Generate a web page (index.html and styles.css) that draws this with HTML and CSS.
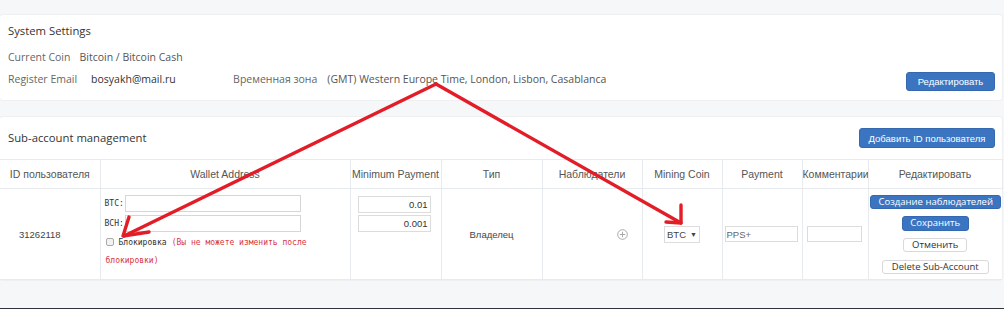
FILE: index.html
```html
<!DOCTYPE html>
<html>
<head>
<meta charset="utf-8">
<link rel="stylesheet" href="styles.css">
</head>
<body>
<div class="page">
  <section class="card settings">
    <div class="card-title">System Settings</div>
    <div class="info-row">
      <span class="label">Current Coin</span>
      <span class="value coin">Bitcoin / Bitcoin Cash</span>
    </div>
    <div class="info-row last">
      <span class="label">Register Email</span>
      <span class="value email">bosyakh@mail.ru</span>
      <span class="label">Временная зона</span>
      <span class="value tz">(GMT) Western Europe Time, London, Lisbon, Casablanca</span>
      <button class="btn btn-primary btn-edit">Редактировать</button>
    </div>
  </section>

  <section class="card subaccounts">
    <div class="card-head">
      <div class="card-title">Sub-account management</div>
      <button class="btn btn-primary btn-add">Добавить ID пользователя</button>
    </div>
    <table class="grid">
      <colgroup>
        <col class="c-id"><col class="c-wallet"><col class="c-min"><col class="c-type"><col class="c-obs"><col class="c-coin"><col class="c-pay"><col class="c-comm"><col class="c-edit">
      </colgroup>
      <thead>
        <tr>
          <th>ID пользователя</th>
          <th>Wallet Address</th>
          <th>Minimum Payment</th>
          <th>Тип</th>
          <th>Наблюдатели</th>
          <th>Mining Coin</th>
          <th>Payment</th>
          <th>Комментарии</th>
          <th>Редактировать</th>
        </tr>
      </thead>
      <tbody>
        <tr class="data-row">
          <td class="id">31262118</td>
          <td class="wallet">
            <div class="addr"><span class="mono">BTC:</span><input class="addr-input" type="text"></div>
            <div class="addr"><span class="mono">BCH:</span><input class="addr-input" type="text"></div>
            <div class="lock mono"><span class="checkbox"></span><span class="lock-label">Блокировка</span><span class="warn">(Вы не можете изменить после</span></div>
            <div class="lock mono"><span class="warn">блокировки)</span></div>
          </td>
          <td class="minpay">
            <input class="num-input" type="text" value="0.01">
            <input class="num-input" type="text" value="0.001">
          </td>
          <td class="type">Владелец</td>
          <td class="obs">
            <svg class="plus" width="11" height="11" viewBox="0 0 11 11"><circle cx="5.5" cy="5.5" r="4.8" fill="none" stroke="#a9a9a9" stroke-width="1"/><path d="M5.5 2.8v5.4M2.8 5.5h5.4" stroke="#a9a9a9" stroke-width="1"/></svg>
          </td>
          <td class="coin-cell"><span class="select">BTC <span class="caret">▼</span></span></td>
          <td class="pay-cell"><input class="pay-input" type="text" value="PPS+"></td>
          <td class="comm-cell"><input class="comm-input" type="text"></td>
          <td class="edit">
            <div class="actions">
              <button class="btn btn-primary act act-wide">Создание наблюдателей</button>
              <button class="btn btn-primary act act-save">Сохранить</button>
              <button class="btn btn-default act act-cancel">Отменить</button>
              <button class="btn btn-default act act-del">Delete Sub-Account</button>
            </div>
          </td>
        </tr>
      </tbody>
    </table>
  </section>

  <svg class="annotations" width="1004" height="309" viewBox="0 0 1004 309">
    <g fill="none" stroke="#e31d27" stroke-width="3.4" stroke-linecap="round" stroke-linejoin="round">
      <path d="M436 84 L124 236"/>
      <path d="M129 217 L123 236 L149 232"/>
      <path d="M436 84 L681 223"/>
      <path d="M681 205 L681 223 L666 222"/>
    </g>
  </svg>
</div>
</body>
</html>
```
FILE: styles.css
```css
html, body {
  margin: 0;
  padding: 0;
}
body {
  background: #f6f7f9;
  font-family: "Open Sans", "Liberation Sans", sans-serif;
  color: #333;
}
.page {
  position: relative;
  box-sizing: border-box;
  min-height: 309px;
  padding: 15px 2px 0 0;
  border-bottom: 1px solid #30343c;
}
.card {
  background: #fff;
  border-radius: 3px;
  box-shadow: 0 0 0 1px #eef0f2;
}
.settings {
  box-sizing: border-box;
  height: 85px;
  padding: 0 7px 0 8px;
}
.card-title {
  font-size: 11.3px;
  line-height: 32px;
  color: #333;
}
.info-row {
  display: flex;
  align-items: flex-start;
  font-size: 10.5px;
  line-height: 21px;
}
.info-row.last {
  line-height: 22px;
}
.label {
  color: #666;
}
.value {
  color: #333;
}
.coin {
  margin-left: 9px;
  color: #555;
}
.email {
  margin-left: 14px;
  width: 142px;
}
.tz {
  margin-left: 10px;
  color: #555;
}
.btn {
  font-family: "Liberation Sans", Arial, sans-serif;
  border-radius: 3px;
  padding: 0;
  cursor: pointer;
}
.btn-primary {
  background: #3b75c2;
  border: 1px solid #3469b0;
  color: #fff;
}
.btn-default {
  background: #fff;
  border: 1px solid #d9d9d9;
  color: #333;
}
.btn-edit {
  margin-left: auto;
  margin-top: 4px;
  width: 89px;
  height: 19px;
  font-size: 9.5px;
}
.subaccounts {
  margin-top: 17px;
}
.card-head {
  display: flex;
  align-items: center;
  justify-content: space-between;
  height: 42px;
  padding: 0 7px 0 8px;
}
.card-head .card-title {
  line-height: 20px;
  margin-top: -1px;
}
.btn-add {
  width: 136px;
  height: 20px;
  font-size: 9.5px;
}
.grid {
  width: 100%;
  border-collapse: collapse;
  table-layout: fixed;
  font-family: "Liberation Sans", Arial, sans-serif;
}
.c-id { width: 100px; }
.c-wallet { width: 250px; }
.c-min { width: 91px; }
.c-type { width: 101px; }
.c-obs { width: 100px; }
.c-coin { width: 80px; }
.c-pay { width: 80px; }
.c-comm { width: 66px; }
.c-edit { width: 134px; }
.grid th {
  height: 28px;
  font-weight: normal;
  font-size: 10.5px;
  color: #555;
  border: 1px solid #e7eaee;
  border-left: none;
  padding: 0;
  white-space: nowrap;
  overflow: hidden;
}
.grid th + th, .grid td + td {
  border-left: 1px solid #e7eaee;
}
.data-row {
  height: 91px;
}
.grid td {
  padding: 0;
  text-align: center;
  vertical-align: middle;
  font-size: 9.5px;
  color: #444;
  border-bottom: 1px solid #e7eaee;
}
.grid td.id {
  text-align: left;
  padding-left: 19px;
}
.grid td.wallet {
  text-align: left;
  vertical-align: top;
  padding: 6px 0 0 4px;
}
.mono {
  font-family: "DejaVu Sans Mono", "Liberation Mono", monospace;
  font-size: 8px;
  color: #333;
}
.addr {
  display: flex;
  align-items: center;
  height: 17px;
  margin-bottom: 3px;
}
.addr .mono {
  width: 20px;
}
.addr-input {
  box-sizing: border-box;
  width: 176px;
  height: 17px;
  border: 1px solid #d6d6d6;
  padding: 0;
  margin: 0;
}
.lock {
  line-height: 18px;
  padding-left: 1px;
  margin-top: -1px;
  white-space: nowrap;
}
.lock + .lock {
  margin-top: 0;
}
.checkbox {
  display: inline-block;
  box-sizing: border-box;
  width: 8px;
  height: 8px;
  border: 1px solid #aaa;
  border-radius: 2px;
  background: #f2f2f2;
  vertical-align: -1px;
  margin-right: 5px;
}
.lock-label {
  margin-right: 5px;
}
.warn {
  color: #d9363e;
}
.grid td.minpay {
  vertical-align: top;
  padding: 7px 0 0 7px;
  text-align: left;
}
.num-input {
  display: block;
  box-sizing: border-box;
  width: 73px;
  height: 17px;
  margin: 0 0 2px;
  padding: 0 2px;
  border: 1px solid #dcdcdc;
  text-align: right;
  font-family: "Liberation Sans", Arial, sans-serif;
  font-size: 9.5px;
  color: #333;
}
.plus {
  display: inline-block;
  vertical-align: middle;
  margin-left: 60px;
}
.select {
  display: inline-flex;
  align-items: center;
  box-sizing: border-box;
  width: 36px;
  height: 17px;
  border: 1px solid #ddd;
  padding-left: 2px;
  font-size: 9.5px;
}
.caret {
  font-size: 7px;
  margin-left: 4px;
}
.grid td.pay-cell, .grid td.comm-cell {
  text-align: left;
  padding-left: 2px;
}
.grid td.comm-cell {
  padding-left: 4px;
}
.pay-input, .comm-input {
  box-sizing: border-box;
  height: 16px;
  border: 1px solid #dcdcdc;
  padding: 0 1px;
  margin: 0;
  font-family: "Liberation Sans", Arial, sans-serif;
  font-size: 9.5px;
  color: #666;
}
.pay-input { width: 73px; }
.comm-input { width: 55px; }
.actions {
  display: flex;
  flex-direction: column;
  align-items: center;
  gap: 7px;
}
.act {
  font-family: "Open Sans", sans-serif;
  font-size: 9.5px;
  height: 15px;
  line-height: 12px;
}
.act-wide { width: 131px; height: 14px; margin-left: 1px; }
.act-save { width: 67px; }
.act-cancel { width: 64px; height: 14px; }
.act-del { width: 107px; height: 14px; margin-top: 1px; }
.annotations {
  position: absolute;
  left: 0;
  top: 0;
  pointer-events: none;
}
```
